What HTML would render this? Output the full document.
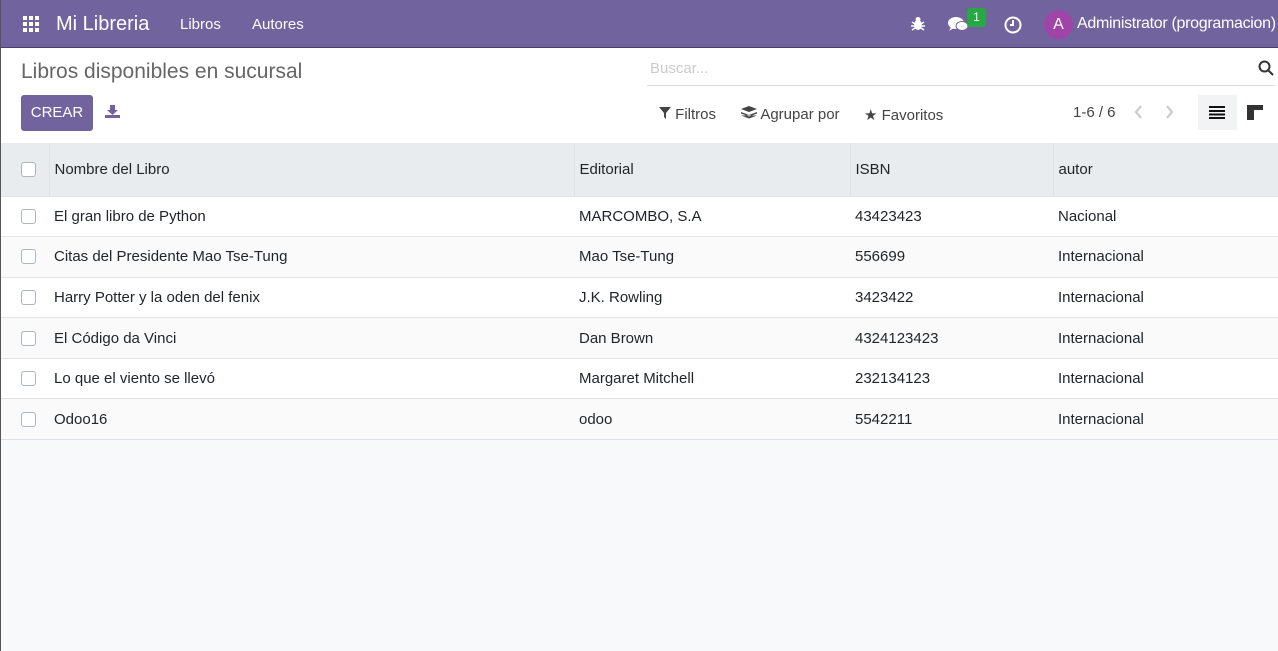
<!DOCTYPE html><html><head><meta charset="utf-8"><style>
*{box-sizing:border-box;margin:0;padding:0}
body{width:1278px;height:651px;overflow:hidden;font-family:"Liberation Sans",sans-serif;background:#f8f9fa;color:#212529;font-size:15px;border-left:1px solid #555;position:relative}
.nav{position:absolute;left:0;top:0;width:1278px;height:48px;background:#71639e;border-bottom:1px solid #4a3f6b;color:#fff}
.nav span{position:absolute;top:16px}
.cp{position:absolute;top:48px;left:0;width:1278px;height:95px;background:#fff}
.abs{position:absolute}
table{position:absolute;top:143px;left:0;width:1278px;border-collapse:collapse;background:#fff}
th{height:53px;background:#e9ecef;text-align:left;font-weight:normal;border-right:1px solid #dee2e6;padding-left:5px}
td{height:40.6px;border-top:1px solid #e3e3e3;padding-left:5px}
tr:nth-child(odd) td{background:#fafafa}
tr:last-child td{border-bottom:1px solid #dee2e6}
.cb{width:15px;height:15px;border:1px solid #adb5bd;border-radius:3px;background:#fff;margin-left:20px}
th:first-child,td:first-child{width:48px;padding:0}
</style></head><body>
<div class="nav">
<svg class="abs" style="left:22px;top:16px" width="16" height="16"><g fill="#fff"><rect x="0" y="0" width="4" height="4"/><rect x="6" y="0" width="4" height="4"/><rect x="12" y="0" width="4" height="4"/><rect x="0" y="6" width="4" height="4"/><rect x="6" y="6" width="4" height="4"/><rect x="12" y="6" width="4" height="4"/><rect x="0" y="12" width="4" height="4"/><rect x="6" y="12" width="4" height="4"/><rect x="12" y="12" width="4" height="4"/></g></svg>
<span style="left:55px;top:13px;font-size:20px">Mi Libreria</span>
<span style="left:179px">Libros</span>
<span style="left:251px">Autores</span>
<svg class="abs" style="left:910px;top:16px" width="14" height="15"><ellipse cx="7" cy="9" rx="4" ry="5" fill="#fff"/><circle cx="7" cy="3.5" r="2.5" fill="#fff"/><path d="M1 6l3 2M13 6l-3 2M0 10h3M14 10h-3M1 14l3-2M13 14l-3-2" stroke="#fff" stroke-width="1.5"/></svg>
<svg class="abs" style="left:947px;top:15px" width="22" height="18"><ellipse cx="8" cy="8" rx="8" ry="6" fill="#fff"/><path d="M3 12l-2 4 5-3z" fill="#fff"/><ellipse cx="14" cy="11" rx="6" ry="4.5" fill="#fff" stroke="#71639e" stroke-width="1"/></svg>
<div class="abs" style="left:966px;top:8px;width:19px;height:19px;background:#28a745;border-radius:3px;font-size:12px;text-align:center;line-height:18px">1</div>
<svg class="abs" style="left:1003px;top:16px" width="18" height="18"><circle cx="9" cy="9" r="7.5" fill="none" stroke="#fff" stroke-width="2"/><path d="M9 4v5H6" stroke="#fff" stroke-width="2" fill="none"/></svg>
<div class="abs" style="left:1043px;top:10px;width:29px;height:29px;border-radius:50%;background:#a044a8;text-align:center;line-height:29px;font-size:16px">A</div>
<span style="left:1076px;top:15px;font-size:16px;white-space:nowrap;letter-spacing:-0.3px">Administrator (programacion)</span>
</div>
<div class="cp">
<div class="abs" style="left:20px;top:12px;font-size:21px;color:#666">Libros disponibles en sucursal</div>
<div class="abs" style="left:20px;top:47px;width:72px;height:36px;background:#71639e;border-radius:3px;color:#fff;text-align:center;line-height:36px;font-size:15px">CREAR</div>
<svg class="abs" style="left:104px;top:57px" width="15" height="13"><path d="M5 0h5v5h3l-5.5 5L2 5h3z" fill="#71639e"/><rect x="0" y="10" width="15" height="3" fill="#71639e"/></svg>
<div class="abs" style="left:649px;top:12px;font-size:15px;color:#ccc">Buscar...</div>
<div class="abs" style="left:646px;top:37px;width:628px;border-top:1px solid #ddd"></div>
<svg class="abs" style="left:1257px;top:12px" width="16" height="16"><circle cx="6.5" cy="6.5" r="5" fill="none" stroke="#333" stroke-width="2"/><path d="M10 10l5 5" stroke="#333" stroke-width="2"/></svg>
<div class="abs" style="left:658px;top:58px;color:#444;font-size:15px">
<svg width="12" height="12"><path d="M0 0h12L7 6v6L5 10V6z" fill="#444"/></svg> Filtros</div>
<div class="abs" style="left:740px;top:58px;color:#444;font-size:15px"><svg width="16" height="13"><path d="M8 0l8 3-8 3-8-3zM0 6l8 3 8-3v1.5l-8 3-8-3zM0 9.5l8 3 8-3" fill="#444"/></svg> Agrupar por</div>
<div class="abs" style="left:863px;top:58px;color:#444;font-size:15px">★ Favoritos</div>
<div class="abs" style="left:1072px;top:56px;color:#444;font-size:15px">1-6 / 6</div>
<svg class="abs" style="left:1133px;top:57px" width="40" height="14"><path d="M7 1L2 7l5 6M33 1l5 6-5 6" stroke="#ccc" stroke-width="2.2" fill="none"/></svg>
<div class="abs" style="left:1197px;top:47px;width:39px;height:35px;background:#f2f3f4"></div>
<svg class="abs" style="left:1208px;top:58px" width="16" height="13"><path d="M0 1h16M0 5h16M0 8.5h16M0 12h16" stroke="#111" stroke-width="2"/></svg>
<svg class="abs" style="left:1246px;top:57px" width="16" height="15"><path d="M0 0h16v5h-9v10h-7z" fill="#333"/></svg>
</div>
<table>
<tr><th><div class="cb"></div></th><th style="width:525px">Nombre del Libro</th><th style="width:276px">Editorial</th><th style="width:203px">ISBN</th><th style="border-right:none">autor</th></tr>
<tr><td><div class="cb"></div></td><td>El gran libro de Python</td><td>MARCOMBO, S.A</td><td>43423423</td><td>Nacional</td></tr>
<tr><td><div class="cb"></div></td><td>Citas del Presidente Mao Tse-Tung</td><td>Mao Tse-Tung</td><td>556699</td><td>Internacional</td></tr>
<tr><td><div class="cb"></div></td><td>Harry Potter y la oden del fenix</td><td>J.K. Rowling</td><td>3423422</td><td>Internacional</td></tr>
<tr><td><div class="cb"></div></td><td>El Código da Vinci</td><td>Dan Brown</td><td>4324123423</td><td>Internacional</td></tr>
<tr><td><div class="cb"></div></td><td>Lo que el viento se llevó</td><td>Margaret Mitchell</td><td>232134123</td><td>Internacional</td></tr>
<tr><td><div class="cb"></div></td><td>Odoo16</td><td>odoo</td><td>5542211</td><td>Internacional</td></tr>
</table>
</body></html>
